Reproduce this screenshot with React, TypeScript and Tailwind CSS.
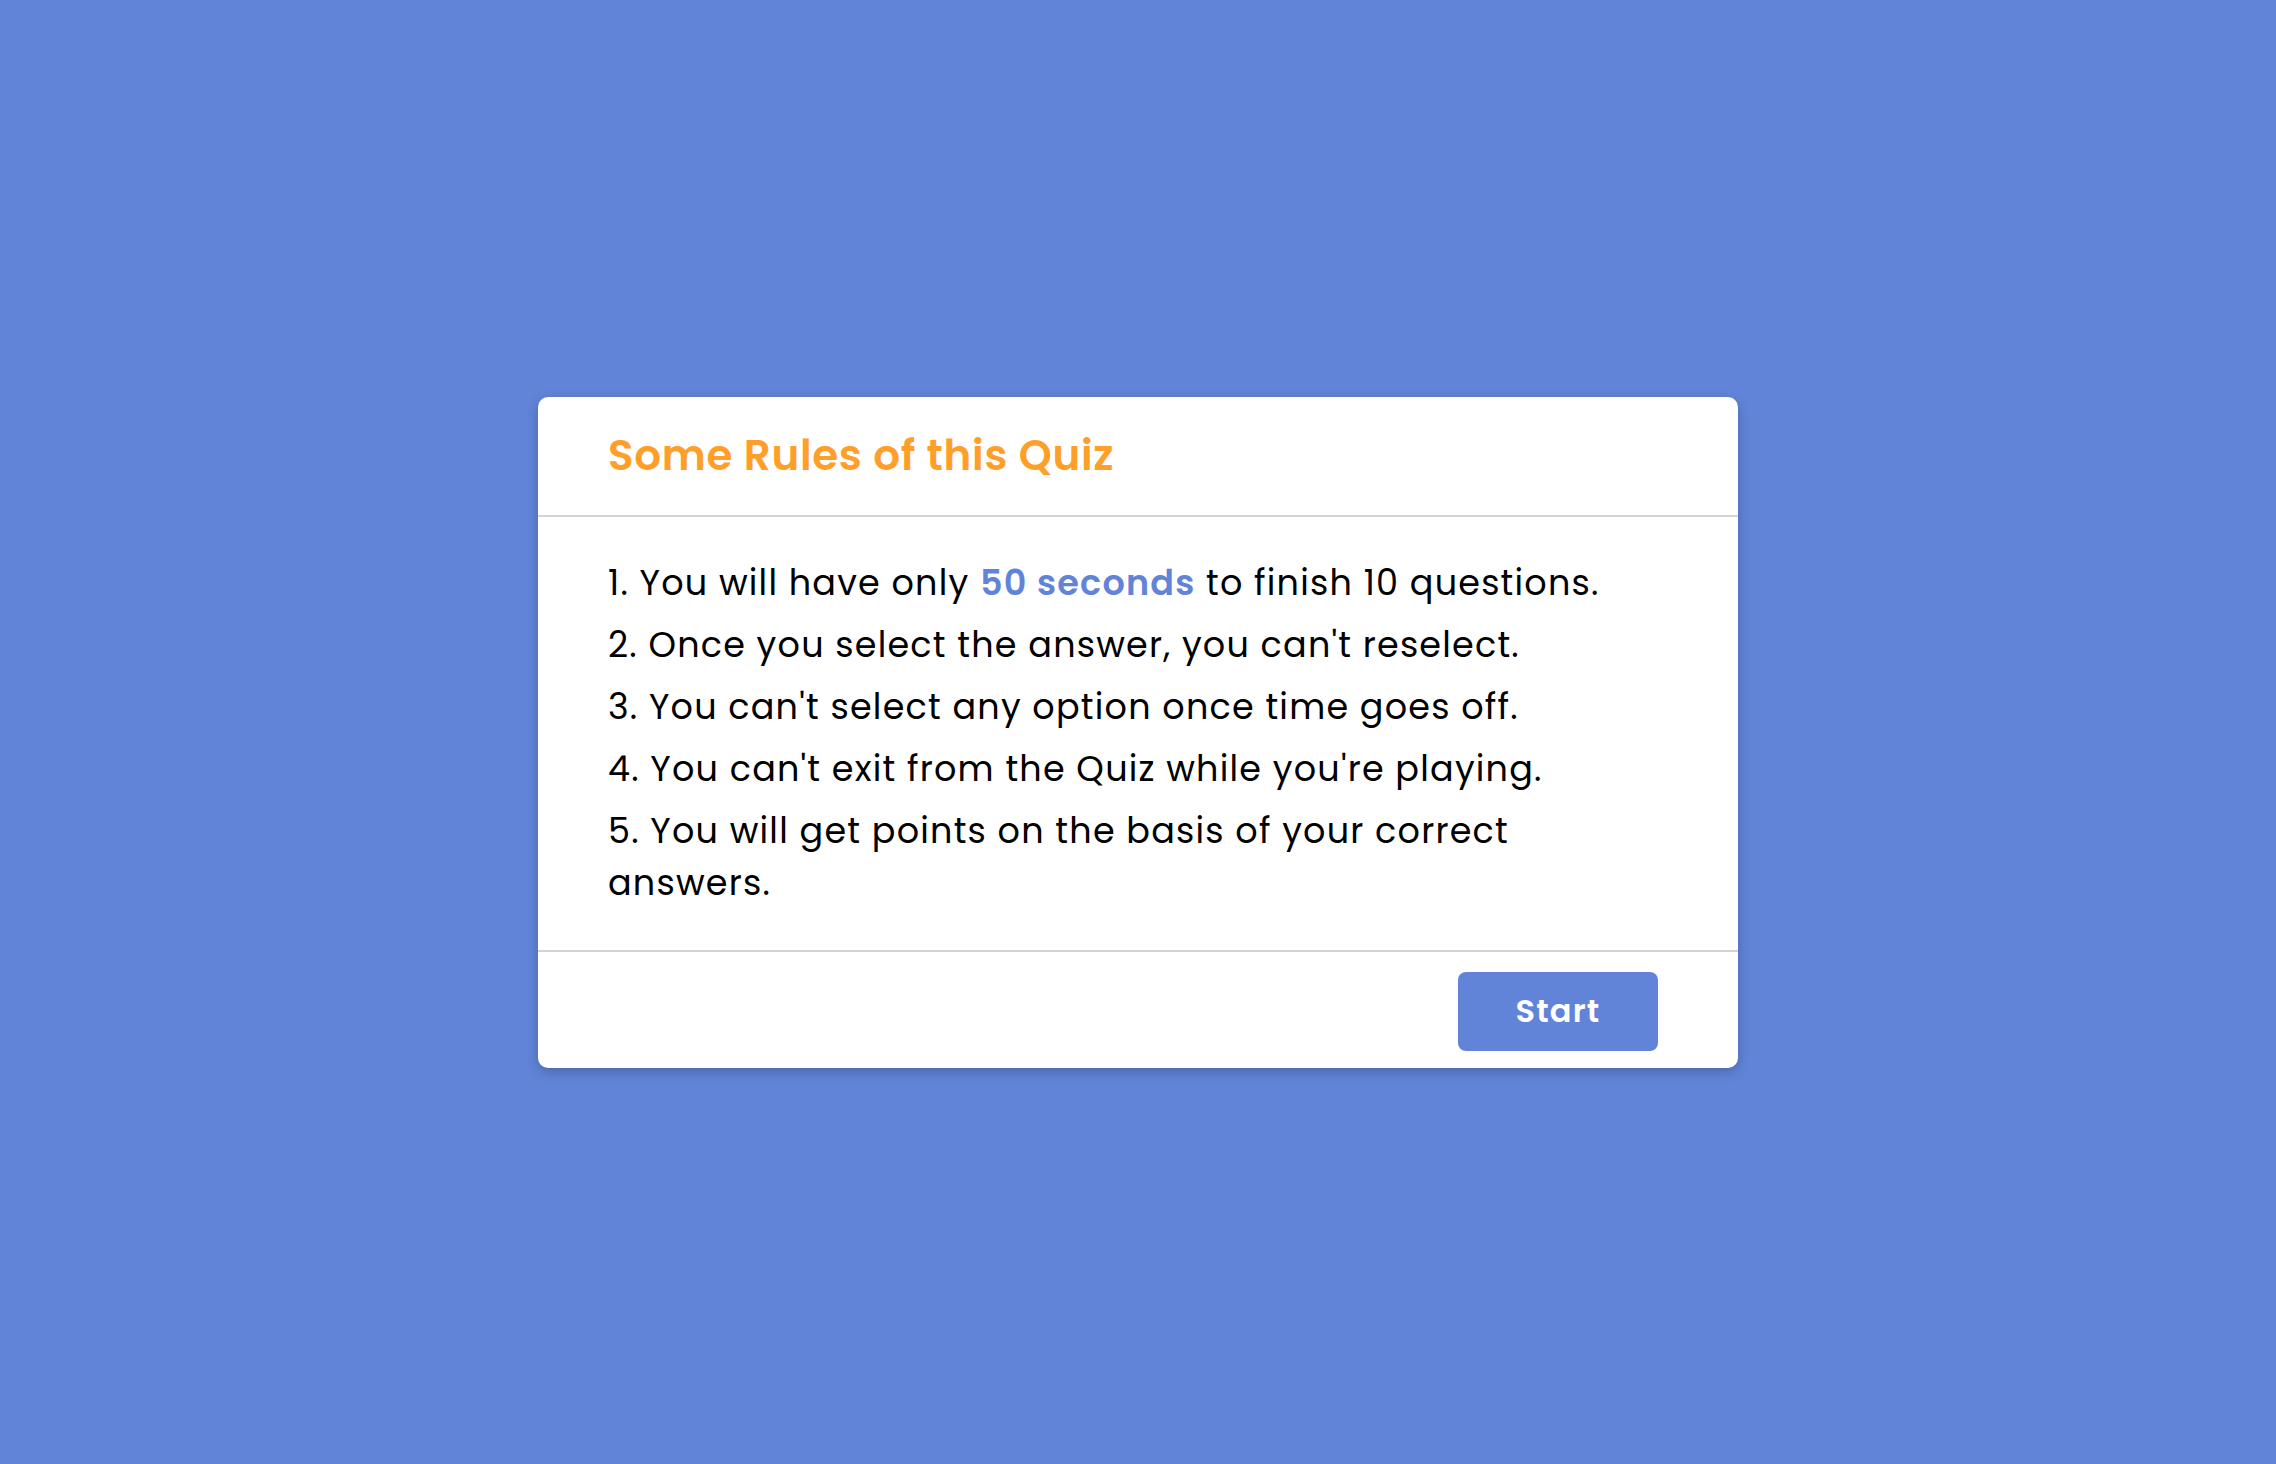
import React from "react";

const rules: React.ReactNode[] = [
  <>
    1. You will have only{" "}
    <span className="font-semibold text-[#6184d8]">50 seconds</span> to finish
    10 questions.
  </>,
  <>2. Once you select the answer, you can't reselect.</>,
  <>3. You can't select any option once time goes off.</>,
  <>4. You can't exit from the Quiz while you're playing.</>,
  <>5. You will get points on the basis of your correct answers.</>,
];

export default function App() {
  return (
    <div
      className="flex min-h-screen items-center justify-center bg-[#6184d8]"
      style={{ fontFamily: '"Poppins", Inter, "Open Sans", sans-serif' }}
    >
      <div className="w-[1200px] rounded-[10px] bg-white shadow-[0_4px_12px_rgba(0,0,0,0.22)]">
        {/* TITLE */}
        <div className="flex h-[120px] items-center border-b-2 border-[#d3d3d3] px-[70px]">
          <h1 className="text-[42px] font-semibold tracking-[0.7px] text-[#ff9f2a]">
            Some Rules of this Quiz
          </h1>
        </div>

        {/* RULES */}
        <div className="flex flex-col gap-[10px] px-[70px] pt-[40px] pb-[41px]">
          {rules.map((rule, i) => (
            <div
              key={i}
              className="max-w-[1000px] text-[35px] leading-[52px] tracking-[1.2px] text-black"
            >
              {rule}
            </div>
          ))}
        </div>

        {/* BUTTONS */}
        <div className="flex h-[118px] items-center justify-end border-t-2 border-[#d3d3d3] px-[80px]">
          <button className="mt-[3px] h-[79px] w-[200px] rounded-lg bg-[#6184d8] text-[32px] font-semibold tracking-[1.2px] text-white">
            Start
          </button>
        </div>
      </div>
    </div>
  );
}
